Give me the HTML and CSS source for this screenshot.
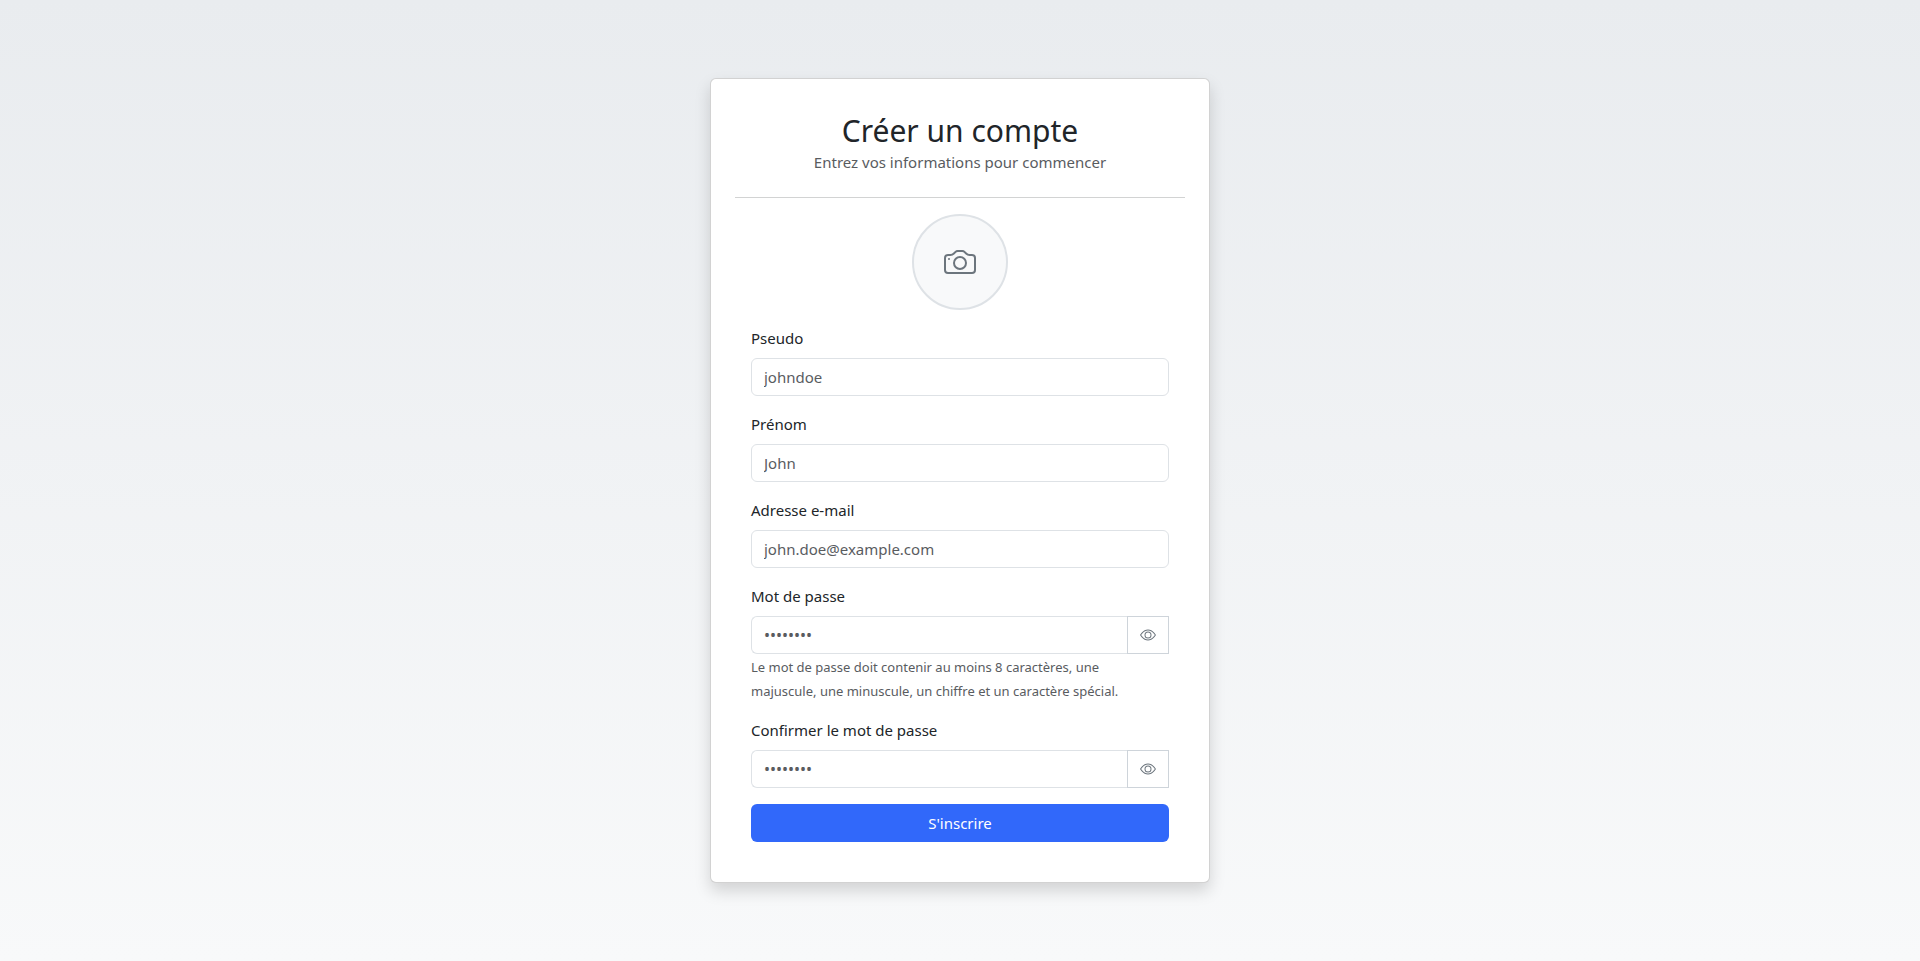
FILE: index.html
```html
<!DOCTYPE html>
<html lang="fr">
<head>
<meta charset="utf-8">
<meta name="viewport" content="width=device-width, initial-scale=1">
<title>Créer un compte</title>
<link rel="stylesheet" href="styles.css">
</head>
<body>
<main class="card">
  <header class="card-header">
    <h1 class="title">Créer un compte</h1>
    <p class="subtitle">Entrez vos informations pour commencer</p>
  </header>
  <form class="form">
    <button type="button" class="avatar" aria-label="Choisir une photo">
      <svg width="32" height="32" viewBox="0 0 16 16" fill="currentColor" aria-hidden="true">
        <path d="M15 12a1 1 0 0 1-1 1H2a1 1 0 0 1-1-1V6a1 1 0 0 1 1-1h1.172a3 3 0 0 0 2.120-.879l.830-.828A1 1 0 0 1 6.827 3h2.344a1 1 0 0 1 .707.293l.828.828A3 3 0 0 0 12.828 5H14a1 1 0 0 1 1 1zM2 4a2 2 0 0 0-2 2v6a2 2 0 0 0 2 2h12a2 2 0 0 0 2-2V6a2 2 0 0 0-2-2h-1.172a2 2 0 0 1-1.414-.586l-.828-.828A2 2 0 0 0 9.172 2H6.828a2 2 0 0 0-1.414.586l-.828.828A2 2 0 0 1 3.172 4z"/>
        <path d="M8 11a2.500 2.500 0 1 1 0-5 2.500 2.500 0 0 1 0 5m0 1a3.500 3.500 0 1 0 0-7 3.500 3.500 0 0 0 0 7M3 6.500a.5.5 0 1 1-1 0 .5.5 0 0 1 1 0"/>
      </svg>
    </button>
    <div class="field">
      <label for="pseudo">Pseudo</label>
      <input class="input" id="pseudo" type="text" placeholder="johndoe">
    </div>
    <div class="field">
      <label for="prenom">Prénom</label>
      <input class="input" id="prenom" type="text" placeholder="John">
    </div>
    <div class="field">
      <label for="email">Adresse e-mail</label>
      <input class="input" id="email" type="email" placeholder="john.doe@example.com">
    </div>
    <div class="field">
      <label for="password">Mot de passe</label>
      <div class="input-group">
        <input class="input" id="password" type="password" placeholder="••••••••" aria-describedby="password-hint">
        <button type="button" class="reveal" aria-label="Afficher le mot de passe">
          <svg width="16" height="16" viewBox="0 0 16 16" fill="currentColor" aria-hidden="true">
            <path d="M16 8s-3-5.500-8-5.500S0 8 0 8s3 5.500 8 5.500S16 8 16 8M1.173 8a13 13 0 0 1 1.660-2.043C4.120 4.668 5.880 3.500 8 3.500s3.879 1.168 5.168 2.457A13 13 0 0 1 14.828 8q-.086.130-.195.288c-.335.480-.830 1.120-1.465 1.755C11.879 11.332 10.119 12.500 8 12.500s-3.879-1.168-5.168-2.457A13 13 0 0 1 1.172 8z"/>
            <path d="M8 5.500a2.500 2.500 0 1 0 0 5 2.500 2.500 0 0 0 0-5M4.500 8a3.500 3.500 0 1 1 7 0 3.500 3.500 0 0 1-7 0"/>
          </svg>
        </button>
      </div>
      <p class="hint" id="password-hint"><small>Le mot de passe doit contenir au moins 8 caractères, une majuscule, une minuscule, un chiffre et un caractère spécial.</small></p>
    </div>
    <div class="field">
      <label for="confirm">Confirmer le mot de passe</label>
      <div class="input-group">
        <input class="input" id="confirm" type="password" placeholder="••••••••">
        <button type="button" class="reveal" aria-label="Afficher la confirmation">
          <svg width="16" height="16" viewBox="0 0 16 16" fill="currentColor" aria-hidden="true">
            <path d="M16 8s-3-5.500-8-5.500S0 8 0 8s3 5.500 8 5.500S16 8 16 8M1.173 8a13 13 0 0 1 1.660-2.043C4.120 4.668 5.880 3.500 8 3.500s3.879 1.168 5.168 2.457A13 13 0 0 1 14.828 8q-.086.130-.195.288c-.335.480-.830 1.120-1.465 1.755C11.879 11.332 10.119 12.500 8 12.500s-3.879-1.168-5.168-2.457A13 13 0 0 1 1.172 8z"/>
            <path d="M8 5.500a2.500 2.500 0 1 0 0 5 2.500 2.500 0 0 0 0-5M4.500 8a3.500 3.500 0 1 1 7 0 3.500 3.500 0 0 1-7 0"/>
          </svg>
        </button>
      </div>
    </div>
    <button type="submit" class="submit">S'inscrire</button>
  </form>
</main>
</body>
</html>
```
FILE: styles.css
```css
*, *::before, *::after { box-sizing: border-box; }

body {
  margin: 0;
  min-height: 100vh;
  display: flex;
  align-items: center;
  justify-content: center;
  background: linear-gradient(to bottom, #e9ecef, #f8f9fa);
  color: #212529;
  font-family: "Noto Sans", "Open Sans", sans-serif;
  font-size: 15px;
  line-height: 24px;
}

button, input { font: inherit; }

.card {
  width: 100%;
  max-width: 500px;
  padding: 24px;
  background: #fff;
  border: 1px solid rgba(0, 0, 0, 0.175);
  border-radius: 6px;
  box-shadow: 0 8px 16px rgba(0, 0, 0, 0.15);
}

.card-header {
  padding: 8px 16px 23px;
  border-bottom: 1px solid #d2d3d3;
  text-align: center;
}

.title {
  margin: 0;
  font-size: 30px;
  font-weight: 400;
  line-height: 39px;
}

.subtitle { margin: 0; color: #595c5f; }

.form {
  display: flex;
  flex-direction: column;
  gap: 16px;
  padding: 16px;
}

.avatar {
  align-self: center;
  display: flex;
  align-items: center;
  justify-content: center;
  width: 96px;
  height: 96px;
  padding: 0;
  border: 2px solid #dee2e6;
  border-radius: 50%;
  background: #f8f9fa;
  color: #6c757d;
}

.field { display: flex; flex-direction: column; }

.field label { margin-bottom: 8px; }

.input {
  flex: 1;
  width: 100%;
  min-width: 0;
  padding: 6px 12px;
  border: 1px solid #dee2e6;
  border-radius: 6px;
  background: #fff;
  color: #212529;
  line-height: 24px;
}

.input::placeholder { color: #595c5f; opacity: 1; }

.input-group { display: flex; }

.input-group .input {
  border-right: 0;
  border-radius: 6px 0 0 6px;
  font-size: 16px;
}

.reveal {
  display: flex;
  align-items: center;
  padding: 0 12px;
  border: 1px solid #ced4da;
  background: #fff;
  color: #6c757d;
}

.hint {
  margin: 0;
  padding-right: 16px;
  color: #595c5f;
}

.hint small {
  font-size: 13px;
  line-height: 16px;
}

.submit {
  padding: 7px 12px;
  border: 0;
  border-radius: 6px;
  background: #3168fa;
  color: #fff;
}
```
